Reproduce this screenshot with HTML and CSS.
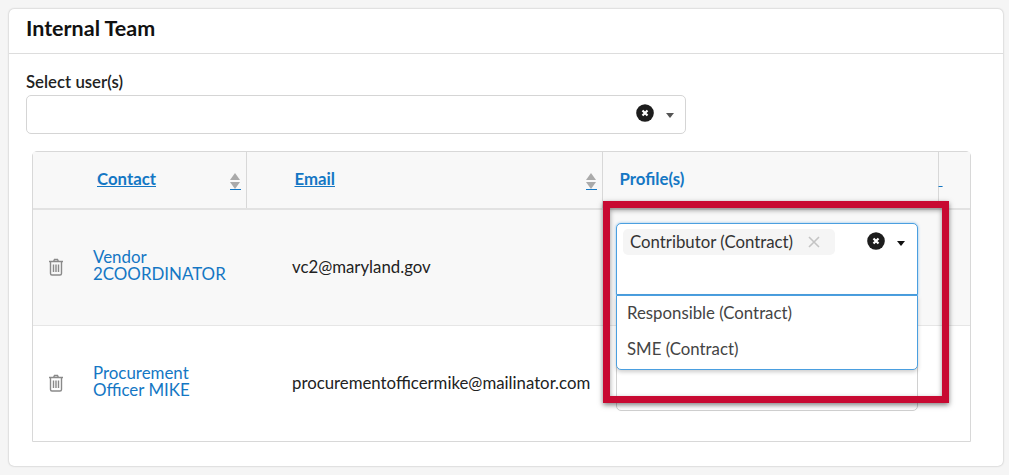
FILE: index.html
```html
<!DOCTYPE html>
<html lang="en">

<head>
  <meta charset="UTF-8">
  <meta name="viewport" content="width=device-width,initial-scale=1.0">
  <title>Internal Team</title>
  <link rel="stylesheet" href="styles.css">
</head>

<body>
  <svg class="defs" width="0" height="0">
    <symbol id="clear" viewBox="0 0 18 18">
      <circle cx="9" cy="9" r="8.8" fill="#1d1d1d"/>
      <path d="M6.500 6.500l5 5M11.500 6.500l-5 5" stroke="#fff" stroke-width="2.200"/>
    </symbol>
    <symbol id="trash" viewBox="0 0 16 18">
      <path d="M1 3.500h14M5.500 3.500l1-2h3l1 2M2.500 3.500v12a1.500 1.500 0 0 0 1.500 1.500h8a1.500 1.500 0 0 0 1.500-1.500v-12M5.500 6.500v7.500M8 6.500v7.500M10.500 6.500v7.500" fill="none" stroke="#8a8a8a" stroke-width="1.4"/>
    </symbol>
  </svg>

  <div class="panel">
    <h2 class="panel-title">Internal Team</h2>
    <div class="panel-body">
      <label class="field-label">Select user(s)</label>
      <div class="select select-users">
        <svg class="clear-icon"><use href="#clear"/></svg>
        <span class="caret caret-grey"></span>
      </div>

      <div class="table-wrap">
        <table class="team-table">
          <thead>
            <tr>
              <th class="col-contact"><a href="#">Contact</a><span class="sorter"></span></th>
              <th class="col-email"><a href="#">Email</a><span class="sorter"></span></th>
              <th class="col-profile"><span class="plain-head">Profile(s)</span></th>
              <th class="col-extra"><a href="#">&nbsp;</a></th>
            </tr>
          </thead>
          <tbody>
            <tr class="row-grey">
              <td>
                <div class="contact">
                  <svg class="trash-icon"><use href="#trash"/></svg>
                  <a href="#" class="contact-name">Vendor 2COORDINATOR</a>
                </div>
              </td>
              <td class="email">vc2@maryland.gov</td>
              <td class="profile">
                <div class="select select-open">
                  <span class="tag">Contributor (Contract)<svg class="tag-x" viewBox="0 0 12 12"><path d="M1 1l10 10M11 1L1 11"/></svg></span>
                  <svg class="clear-icon"><use href="#clear"/></svg>
                  <span class="caret"></span>
                </div>
                <ul class="dropdown">
                  <li>Responsible (Contract)</li>
                  <li>SME (Contract)</li>
                </ul>
              </td>
              <td></td>
            </tr>
            <tr class="row-white">
              <td>
                <div class="contact">
                  <svg class="trash-icon"><use href="#trash"/></svg>
                  <a href="#" class="contact-name">Procurement Officer MIKE</a>
                </div>
              </td>
              <td class="email">procurementofficermike@mailinator.com</td>
              <td class="profile">
                <div class="select select-behind"></div>
              </td>
              <td></td>
            </tr>
          </tbody>
        </table>
      </div>
    </div>
  </div>

  <div class="highlight"></div>
</body>

</html>
```

FILE: styles.css
```css
* {
  box-sizing: border-box;
}
body {
  margin: 0;
  height: 475px;
  padding: 9px 6px 0 9px;
  background: #f5f5f5;
  font-family: Lato, "Liberation Sans", sans-serif;
  font-size: 16.8px;
  color: #222;
  overflow: hidden;
}
a {
  color: #1477c4;
}
.defs {
  position: absolute;
}
.panel {
  height: 457px;
  background: white;
  border-radius: 5px;
  box-shadow: 0 0 2px rgba(0, 0, 0, 0.3);
}
.panel-title {
  margin: 0;
  height: 45px;
  padding: 6px 17px 0;
  border-bottom: 1px solid #ddd;
  font-size: 21.5px;
  font-weight: 700;
  line-height: 27px;
  color: #111;
}
.panel-body {
  padding: 18px 17px 0;
}
.field-label {
  display: block;
  height: 23px;
  font-size: 16.8px;
  font-weight: 600;
  line-height: 20px;
  color: #222;
}
.select {
  display: flex;
  justify-content: flex-end;
  align-items: flex-start;
  border: 1px solid #d5d5d5;
  border-radius: 5px;
  background: white;
}
.select-users {
  width: 660px;
  height: 39px;
  padding: 8px 11px 0 0;
}
.clear-icon {
  flex: none;
  width: 18px;
  height: 18px;
}
.caret {
  flex: none;
  width: 0;
  height: 0;
  margin: 9px 0 0 12px;
  border-left: 4.5px solid transparent;
  border-right: 4.5px solid transparent;
  border-top: 5px solid #111;
}
.caret-grey {
  border-top-color: #555;
}
.table-wrap {
  width: 939px;
  height: 291px;
  margin: 17px 0 0 6px;
  border: 1px solid #d8d8d8;
  border-radius: 5px 5px 0 0;
}
.team-table {
  width: 100%;
  border-collapse: collapse;
  table-layout: fixed;
}
.team-table thead tr {
  height: 57px;
  background: #f8f8f8;
}
.team-table th {
  position: relative;
  padding: 0 0 4px;
  border-bottom: 2px solid #e2e2e2;
  border-right: 1px solid #d8d8d8;
  font-size: 16.8px;
  font-weight: 700;
  text-align: left;
  vertical-align: middle;
}
.team-table th:last-child {
  border-right: none;
}
.col-contact {
  width: 213px;
  padding-left: 64px !important;
}
.col-email {
  width: 356px;
  padding-left: 48px !important;
}
.col-profile {
  width: 336px;
  padding-left: 17px !important;
}
.plain-head {
  color: #1477c4;
}
.sorter {
  position: absolute;
  right: 5px;
  top: 21px;
  width: 11px;
  height: 17px;
  border-bottom: 1px solid #1477c4;
}
.sorter::before,
.sorter::after {
  content: "";
  position: absolute;
  left: 0;
  border-left: 5.5px solid transparent;
  border-right: 5.5px solid transparent;
}
.sorter::before {
  top: 0;
  border-bottom: 7px solid #aaa;
}
.sorter::after {
  top: 9px;
  border-top: 7px solid #aaa;
}
.team-table td {
  padding: 0;
  vertical-align: middle;
}
.team-table tbody tr + tr td {
  border-top: 1px solid #e6e6e6;
}
.row-grey {
  height: 116px;
  background: #f8f8f8;
}
.row-white {
  height: 116px;
}
.contact {
  display: flex;
  align-items: center;
  gap: 29px;
  padding-left: 15px;
}
.trash-icon {
  flex: none;
  width: 16px;
  height: 18px;
}
.contact-name {
  width: 136px;
  margin-bottom: 5px;
  font-size: 16.9px;
  line-height: 17px;
  text-decoration: none;
}
.email {
  padding-left: 46px !important;
  padding-bottom: 2px !important;
  font-size: 16.8px;
  color: #222;
}
.team-table td.profile {
  position: relative;
  padding: 13px 20px 0 14px;
  vertical-align: top;
}
.select-open {
  justify-content: flex-start;
  height: 72px;
  padding: 5px 11px 0 6px;
  border-color: #4a9fe0;
  border-radius: 5px 5px 0 0;
  box-shadow: 0 0 3px rgba(74, 159, 224, 0.6);
}
.tag {
  flex: none;
  display: flex;
  justify-content: space-between;
  align-items: center;
  width: 212px;
  height: 26px;
  padding: 0 15px 2px 7px;
  margin-right: 32px;
  background: #f5f5f5;
  border-radius: 5px;
  font-size: 16.8px;
  color: #333;
}
.tag-x {
  flex: none;
  width: 12px;
  height: 12px;
  margin-top: 2px;
  fill: none;
  stroke: #c4c4c4;
  stroke-width: 1.6;
}
.select-open .clear-icon {
  margin-top: 3px;
}
.select-open .caret {
  margin: 12px 0 0 12px;
}
.dropdown {
  position: absolute;
  left: 14px;
  right: 20px;
  top: 85px;
  z-index: 2;
  margin: 0;
  padding: 0;
  height: 75px;
  list-style: none;
  background: white;
  border: 1px solid #4a9fe0;
  border-radius: 0 0 5px 5px;
  box-shadow: 0 2px 4px rgba(0, 0, 0, 0.2);
}
.dropdown li {
  height: 36px;
  padding: 0 10px;
  font-size: 16.8px;
  line-height: 34px;
  color: #444;
}
.select-behind {
  height: 72px;
  margin-bottom: -12px;
  border-color: #d0d0d0;
}
.highlight {
  position: absolute;
  left: 603px;
  top: 201px;
  width: 346px;
  height: 202px;
  border: 7px solid #c80a32;
  box-shadow: 0 2px 5px rgba(0, 0, 0, 0.5), inset 0 2px 5px rgba(0, 0, 0, 0.4);
  z-index: 5;
}
```
